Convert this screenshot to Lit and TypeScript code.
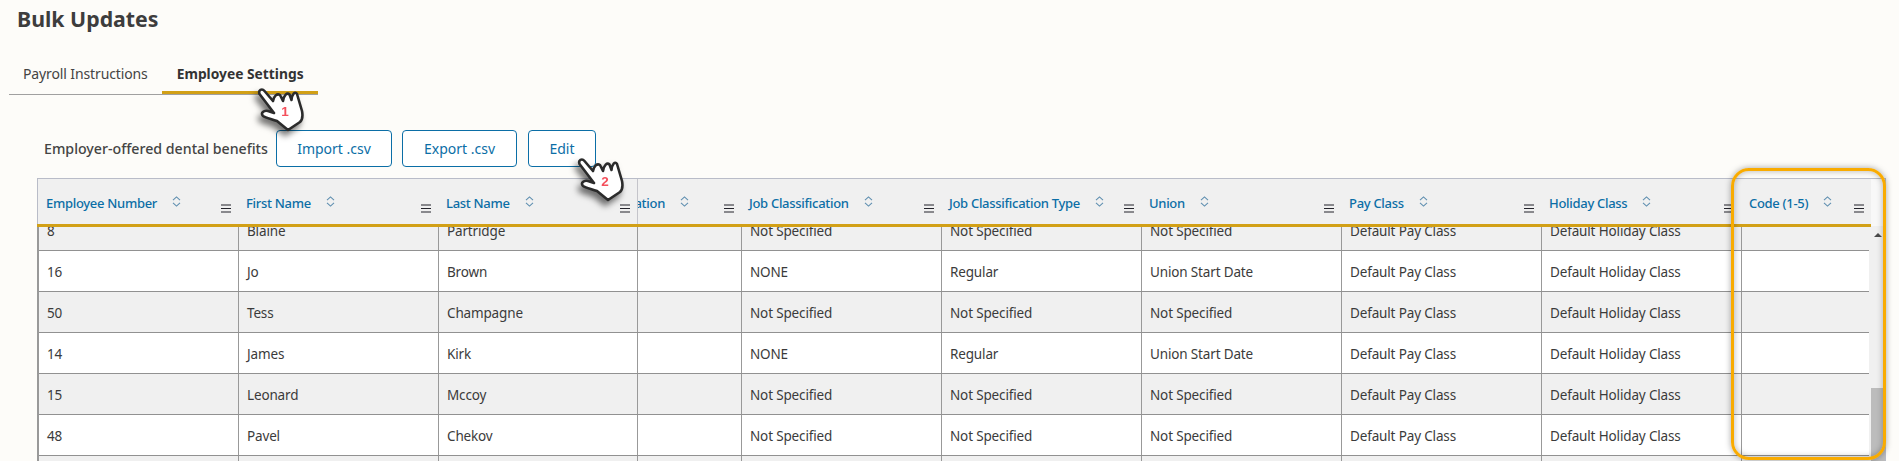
import { LitElement, html, css, svg } from "lit";
import { customElement } from "lit/decorators.js";

const WIDTHS = [199, 200, 199, 104, 200, 200, 200, 200, 200];
const HEAD = [
  "Employee Number", "First Name", "Last Name", "Employee Classification",
  "Job Classification", "Job Classification Type", "Union", "Pay Class", "Holiday Class", "Code (1-5)",
];
const A = ["Not Specified", "Not Specified", "Not Specified"];
const B = ["NONE", "Regular", "Union Start Date"];
const ROWS: string[][] = [
  ["8", "Blaine", "Partridge", ...A],
  ["16", "Jo", "Brown", ...B],
  ["50", "Tess", "Champagne", ...A],
  ["14", "James", "Kirk", ...B],
  ["15", "Leonard", "Mccoy", ...A],
  ["48", "Pavel", "Chekov", ...A],
  ["", "", "", "", "", ""],
];

const sortIcon = html`<svg class="sort" width="9" height="11" viewBox="0 0 9 11" fill="none" stroke="#5f8fb0" stroke-width="1.1">
  <path d="M1 4.2 4.5 .9 8 4.2M1 6.8 4.5 10.1 8 6.8" /></svg>`;
const menuIcon = html`<svg class="menu" width="10" height="9" viewBox="0 0 10 9" stroke="#23232b" stroke-width="1.2">
  <path d="M0 1h10M0 4.5h10M0 8h10" /></svg>`;

const hand = (n: string) => svg`<svg class="hand-svg" width="70" height="56" viewBox="0 0 70 56">
  <path d="M9.5 14C8 10 12 8 14.5 11L23 21C24 16 27 13 30 15L33 21C34 15 37 12 39.5 14.5L41.5 20C42 14 45 11 47 14L52 31C53 36 52 40 50 42L38 50L27 41C22 39 16 38 13 36C10 33 14 30 18 31L24 33Z"
    fill="#fff" stroke="#2b2b2b" stroke-width="2.6" stroke-linejoin="round" />
  <text x="35" y="36" text-anchor="middle" class="num">${n}</text></svg>`;

@customElement("app-root")
export class AppRoot extends LitElement {
  static styles = css`
    :host {
      display: block; position: relative; width: 1899px; height: 461px; overflow: hidden;
      background: #fdfcf9; font-family: "Noto Sans", "Open Sans", sans-serif; color: #3a3a3a;
    }
    h1 { margin: 0; padding: 5px 0 0 17px; font-size: 21.3px; line-height: 27px; font-weight: 700; color: #3d3d3d; }
    .tabs { display: flex; width: 309px; margin: 22px 0 0 9px; border-bottom: 1px solid #a0a0a0; }
    .tab { padding: 10px 14px 7px; font-size: 14px; line-height: 20px; border-bottom: 3px solid transparent; white-space: nowrap; color: #444; letter-spacing: -0.12px; }
    .tab.on { font-weight: 700; color: #333; border-bottom-color: #d2a016; padding-left: 15px; font-size: 13.8px; letter-spacing: 0; }
    .tools { display: flex; align-items: center; margin: 35px 0 0 44px; height: 37px; }
    .label { font-size: 14.2px; font-weight: 500; color: #444; width: 232px; white-space: nowrap; }
    .btn {
      box-sizing: border-box; height: 37px; border: 1.5px solid #0b6ea6; border-radius: 4px;
      background: #fff; color: #0b6ea6; font: 14px "Noto Sans", sans-serif; padding: 0; display: flex; align-items: center; justify-content: center;
    }
    .import { width: 116px; margin-right: 10px; }
    .export { width: 115px; margin-right: 11px; }
    .edit { width: 68px; }
    .table { display: flex; margin: 11px 0 0 37px; width: 1849px; height: 283px; border-top: 1px solid #b9bcc8; border-right: 1px solid #b9bcc8; box-sizing: border-box; }
    .main { width: 1834px; flex: none; display: flex; flex-direction: column; overflow: hidden; }
    .head { display: flex; flex: none; height: 44.5px; background: #f0f0f0; padding-left: 2px; border-bottom: 3px solid #d2a016; box-shadow: inset 1px 0 0 #b9bcc8; }
    .hc { display: flex; box-sizing: border-box; flex: none; padding: 0 7px 0 8px; position: relative; min-width: 0; }
    .hc:first-child { padding-left: 7px; }
    .hc.frozen-edge { border-left: 1px solid #c4c4ca; padding-left: 0; }
    .t { font-size: 13px; letter-spacing: -0.3px; font-weight: 500; color: #0b6ea6; line-height: 18px; white-space: nowrap; margin-top: 15px; }
    .clip { width: 27px; display: flex; justify-content: flex-end; overflow: hidden; flex: none; }
    .sort { margin: 17px 0 0 15px; flex: none; }
    .menu { margin: 25px 0 0 auto; flex: none; }
    .body { flex: 1; overflow: hidden; background: #f0f0f0; }
    .rows { margin-top: -17px; width: 1832px; border-left: 2px solid #999; box-sizing: border-box; }
    .row { display: flex; height: 41px; box-sizing: border-box; border-bottom: 1px solid #919191; background: #fff; }
    .row:nth-child(odd) { background: #f0f0f0; }
    .c { box-sizing: border-box; flex: none; border-left: 1px solid #999; padding: 3px 0 0 8px; font-size: 13.5px; letter-spacing: -0.15px; color: #3b3b3b; display: flex; align-items: center; white-space: nowrap; overflow: hidden; }
    .c:first-child { border-left: none; }
    .scroll { flex: 1; display: flex; flex-direction: column; }
    .scorner { height: 47px; flex: none; background: #f8f8f8; }
    .track { flex: 1; background: #f0f0f0; display: flex; flex-direction: column; align-items: center; }
    .up { margin-top: 7px; width: 0; height: 0; border-left: 4px solid transparent; border-right: 4px solid transparent; border-bottom: 4px solid #4a4a4a; }
    .thumb { margin-top: auto; height: 73px; width: 100%; background: #bcbcbc; }
    .highlight {
      position: absolute; left: 1731px; top: 168px; width: 155px; height: 292px; box-sizing: border-box;
      border: 3px solid #f9ab00; border-radius: 18px;
      box-shadow: 0 0 6px rgba(0,0,0,.35), inset 0 0 6px rgba(0,0,0,.3);
    }
    .hand { position: absolute; width: 70px; height: 56px; }
    .hand.h1 { left: 250px; top: 80px; }
    .hand.h2 { left: 570px; top: 150px; }
    .hand-svg { display: block; overflow: visible; filter: drop-shadow(-3px 5px 3px rgba(0,0,0,.55)); }
    .num { font: 700 13.5px "Liberation Sans", sans-serif; fill: #f4505c; }
  `;

  render() {
    return html`
      <h1>Bulk Updates</h1>
      <div class="tabs">
        <div class="tab">Payroll Instructions</div>
        <div class="tab on">Employee Settings</div>
      </div>
      <div class="tools">
        <span class="label">Employer-offered dental benefits</span>
        <button class="btn import">Import .csv</button>
        <button class="btn export">Export .csv</button>
        <button class="btn edit">Edit</button>
      </div>
      <div class="table">
        <div class="main">
          <div class="head">
            ${HEAD.map((h, i) => {
              const w = i < 9 ? WIDTHS[i] : 130;
              const clipped = i === 3;
              return html`<div class="hc ${clipped ? "frozen-edge" : ""}" style="width:${w}px">
                ${clipped
                  ? html`<div class="clip"><span class="t">${h}</span></div>`
                  : html`<span class="t">${h}</span>`}
                ${sortIcon}${menuIcon}
              </div>`;
            })}
          </div>
          <div class="body">
            <div class="rows">
              ${ROWS.map(
                (r) => html`<div class="row">
                  ${[r[0], r[1], r[2], "", r[3], r[4], r[5], r[0] === "" ? "" : "Default Pay Class", r[0] === "" ? "" : "Default Holiday Class", ""].map(
                    (t, i) => html`<div class="c" style="width:${i < 9 ? WIDTHS[i] : 128}px">${t}</div>`
                  )}
                </div>`
              )}
            </div>
          </div>
        </div>
        <div class="scroll">
          <div class="scorner"></div>
          <div class="track"><div class="up"></div><div class="thumb"></div></div>
        </div>
      </div>
      <div class="highlight"></div>
      <div class="hand h1">${hand("1")}</div>
      <div class="hand h2">${hand("2")}</div>
    `;
  }
}
